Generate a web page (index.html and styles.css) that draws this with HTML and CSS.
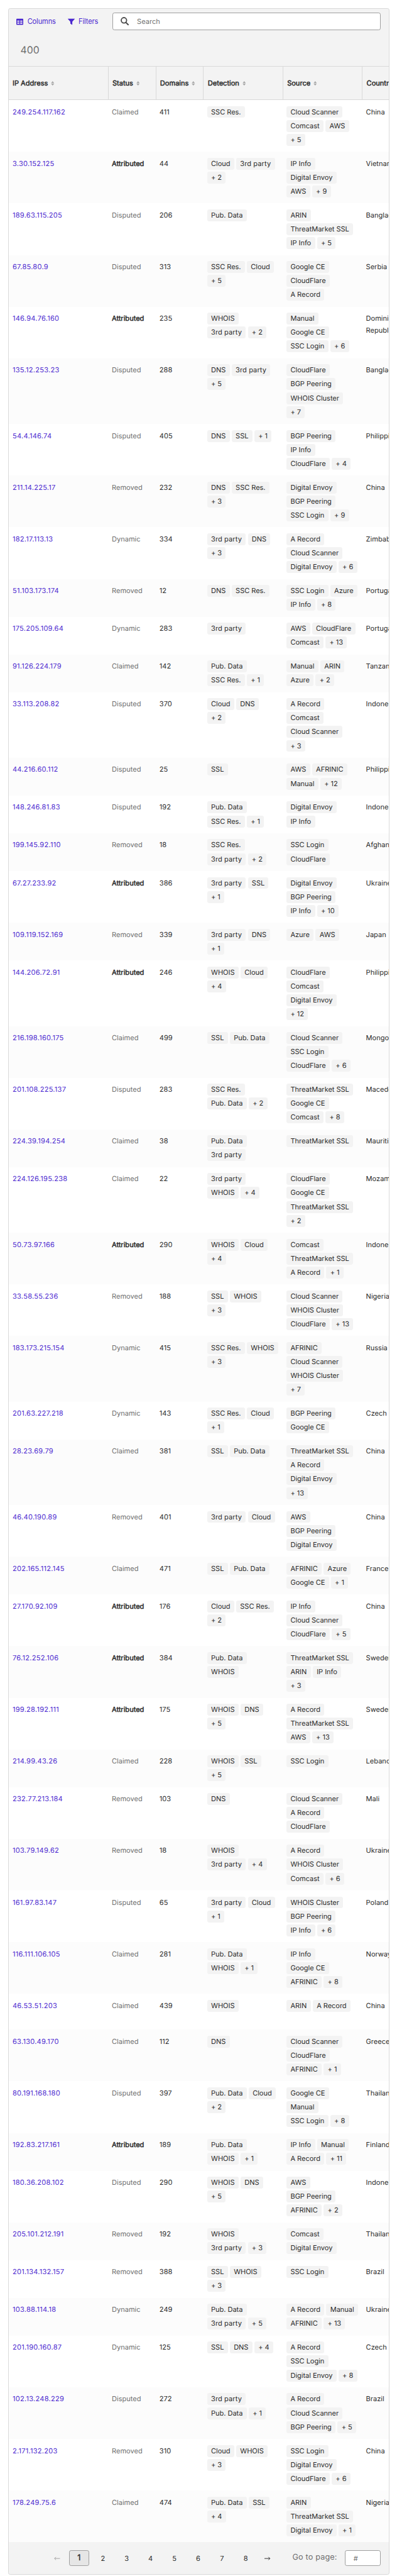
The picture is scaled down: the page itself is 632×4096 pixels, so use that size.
FILE: index.html
```
<!DOCTYPE html>
<html lang="en">
<head>
<meta charset="utf-8">
<title>IP addresses</title>
<link rel="stylesheet" href="styles.css">
</head>
<body>
<main class="panel">
  <div class="toolbar">
    <button class="tool"><svg class="tool-icon" viewBox="0 0 14 14"><path fill="currentColor" fill-rule="evenodd" d="M1.300.8h11.400A1.300 1.300 0 0 1 14 2.100v9.800a1.300 1.300 0 0 1-1.300 1.300H1.300A1.300 1.300 0 0 1 0 11.900V2.100A1.300 1.300 0 0 1 1.300.8zM1.800 4.600v2.300h4.400V4.600zm6 0v2.300h4.400V4.600zM1.800 8.700v2.500h4.400V8.700zm6 0v2.500h4.400V8.700z"/></svg>Columns</button>
    <button class="tool"><svg class="tool-icon" viewBox="0 0 14 14"><path fill="currentColor" d="M.5.8h13c.5 0 .6.500.3.900L9 7v5.800c0 .4-.4.500-.7.300L5.300 11A.8.8 0 0 1 5 10.400V7L.2 1.700C-.1 1.300 0 .8.5.8z"/></svg>Filters</button>
    <label class="search"><svg class="search-icon" viewBox="0 0 17 17"><circle cx="6.700" cy="6.700" r="5.400" fill="none" stroke="currentColor" stroke-width="2.300"/><path d="M10.600 10.900l4.600 4.600" stroke="currentColor" stroke-width="2.600" stroke-linecap="round"/></svg><span class="search-text">Search</span></label>
  </div>
  <div class="count">400</div>
  <div class="grid">
    <div class="row head" id="head"></div>
    <div id="rows"></div>
  </div>
  <nav class="pager">
    <span class="page arrow off"><svg viewBox="0 0 12 8"><path d="M12 4H1M4 1L1 4l3 3" fill="none" stroke="currentColor" stroke-width="1.200"/></svg></span>
    <span class="page current">1</span><span class="page">2</span><span class="page">3</span><span class="page">4</span><span class="page">5</span><span class="page">6</span><span class="page">7</span><span class="page">8</span>
    <span class="page arrow"><svg viewBox="0 0 12 8"><path d="M0 4H11M8 1l3 3-3 3" fill="none" stroke="currentColor" stroke-width="1.200"/></svg></span>
    <span class="goto">Go to page:</span><span class="goto-input">#</span>
  </nav>
</main>
<script src="script.js"></script>
</body>
</html>
```
FILE: styles.css
```
* { box-sizing: border-box; }
html { background: #fff; overflow: hidden; }
body {
  margin: 0;
  zoom: 0.7903;
  overflow: hidden;
  font: 14px/24px Inter, "Liberation Sans", sans-serif;
  text-rendering: geometricPrecision;
  color: #2b2b2b;
}
.panel {
  width: 768px;
  margin: 16px 0 0 16px;
  border: 1px solid #d9d9d9;
  border-radius: 4px;
  background: #f3f3f3;
  overflow: hidden;
}
.toolbar { display: flex; align-items: center; height: 52px; padding: 0 16px; }
.tool {
  display: flex;
  align-items: center;
  gap: 8px;
  margin: 0 24px 0 0;
  padding: 0;
  border: 0;
  background: none;
  font: inherit;
  letter-spacing: -0.15px;
  color: #4c29d0;
}
.tool-icon { width: 14px; height: 14px; }
.search {
  display: flex;
  align-items: center;
  width: 540px;
  height: 36px;
  margin-left: auto;
  padding: 0 15px;
  gap: 16px;
  border: 1px solid #9f9f9f;
  border-radius: 4px;
  background: #fff;
  color: #6f6f6f;
}
.search-icon { width: 17px; height: 17px; color: #4a4a4a; }
.search-text { padding-top: 2px; }
.count { height: 64px; padding: 20px 24px; font-size: 20px; color: #6f6f6f; }
.grid { overflow: hidden; }
.row {
  display: grid;
  grid-template-columns: 200px 96px 96px 160px 160px 160px;
  width: 872px;
  min-height: 72px;
  background: #fff;
}
.row:nth-child(even) { background: #fcfcfc; }
.cell { padding: 12px 8px; }
.head {
  height: 68px;
  min-height: 0;
  border-top: 1px solid #d9d9d9;
  border-bottom: 1px solid #d9d9d9;
  background: #f3f3f3;
  -webkit-text-stroke: 0.6px currentColor;
}
.head .cell { display: flex; align-items: center; gap: 6px; padding: 0 8px; }
.head .cell + .cell { border-left: 1px solid #d9d9d9; }
.sort { width: 7px; height: 9px; fill: #a8a8a8; }
.ip { color: #4c29d0; letter-spacing: 0.33px; }
.status { color: #6f6f6f; }
.attributed { color: #2b2b2b; -webkit-text-stroke: 0.6px currentColor; }
.tags { display: flex; flex-wrap: wrap; align-content: flex-start; gap: 4px; }
.tag {
  padding: 0 8px;
  border-radius: 4px;
  background: #f3f3f3;
  letter-spacing: -0.05px;
  white-space: nowrap;
}
.third-party { min-width: 78px; letter-spacing: 0.12px; }
.country { width: 134px; }
.pager { display: flex; align-items: center; height: 64px; padding: 0 16px 0 82px; }
.page { flex: none; width: 40px; height: 32px; margin-right: 8px; padding-top: 1px; line-height: 32px; text-align: center; }
.current {
  padding: 0;
  border: 1px solid #9f9f9f;
  border-radius: 4px;
  background: #e6e6e6;
  font-size: 16px;
  line-height: 30px;
  -webkit-text-stroke: 0.5px currentColor;
}
.arrow { display: flex; align-items: center; justify-content: center; width: 32px; padding: 0; }
.arrow svg { width: 12px; height: 8px; }
.off { color: #9f9f9f; }
.goto { margin-left: 26px; font-size: 16px; letter-spacing: 0.2px; color: #6f6f6f; white-space: nowrap; }
.goto-input {
  width: 72px;
  height: 32px;
  margin-left: auto;
  padding-left: 16px;
  border: 1px solid #9f9f9f;
  border-radius: 4px;
  background: #fff;
  line-height: 32px;
  color: #6f6f6f;
}
```
FILE: script.js
```
const columns = ["IP Address", "Status", "Domains", "Detection", "Source", "Country"];

// ip | status | domains | detection tags | source tags | country
const data = `249.254.117.162|Claimed|411|SSC Res.|Cloud Scanner,Comcast,AWS,+ 5|China
3.30.152.125|Attributed|44|Cloud,3rd party,+ 2|IP Info,Digital Envoy,AWS,+ 9|Vietnam
189.63.115.205|Disputed|206|Pub. Data|ARIN,ThreatMarket SSL,IP Info,+ 5|Bangladesh
67.85.80.9|Disputed|313|SSC Res.,Cloud,+ 5|Google CE,CloudFlare,A Record|Serbia
146.94.76.160|Attributed|235|WHOIS,3rd party,+ 2|Manual,Google CE,SSC Login,+ 6|Dominican Republic
135.12.253.23|Disputed|288|DNS,3rd party,+ 5|CloudFlare,BGP Peering,WHOIS Cluster,+ 7|Bangladesh
54.4.146.74|Disputed|405|DNS,SSL,+ 1|BGP Peering,IP Info,CloudFlare,+ 4|Philippines
211.14.225.17|Removed|232|DNS,SSC Res.,+ 3|Digital Envoy,BGP Peering,SSC Login,+ 9|China
182.17.113.13|Dynamic|334|3rd party,DNS,+ 3|A Record,Cloud Scanner,Digital Envoy,+ 6|Zimbabwe
51.103.173.174|Removed|12|DNS,SSC Res.|SSC Login,Azure,IP Info,+ 8|Portugal
175.205.109.64|Dynamic|283|3rd party|AWS,CloudFlare,Comcast,+ 13|Portugal
91.126.224.179|Claimed|142|Pub. Data,SSC Res.,+ 1|Manual,ARIN,Azure,+ 2|Tanzania
33.113.208.82|Disputed|370|Cloud,DNS,+ 2|A Record,Comcast,Cloud Scanner,+ 3|Indonesia
44.216.60.112|Disputed|25|SSL|AWS,AFRINIC,Manual,+ 12|Philippines
148.246.81.83|Disputed|192|Pub. Data,SSC Res.,+ 1|Digital Envoy,IP Info|Indonesia
199.145.92.110|Removed|18|SSC Res.,3rd party,+ 2|SSC Login,CloudFlare|Afghanistan
67.27.233.92|Attributed|386|3rd party,SSL,+ 1|Digital Envoy,BGP Peering,IP Info,+ 10|Ukraine
109.119.152.169|Removed|339|3rd party,DNS,+ 1|Azure,AWS|Japan
144.206.72.91|Attributed|246|WHOIS,Cloud,+ 4|CloudFlare,Comcast,Digital Envoy,+ 12|Philippines
216.198.160.175|Claimed|499|SSL,Pub. Data|Cloud Scanner,SSC Login,CloudFlare,+ 6|Mongolia
201.108.225.137|Disputed|283|SSC Res.,Pub. Data,+ 2|ThreatMarket SSL,Google CE,Comcast,+ 8|Macedonia
224.39.194.254|Claimed|38|Pub. Data,3rd party|ThreatMarket SSL|Mauritius
224.126.195.238|Claimed|22|3rd party,WHOIS,+ 4|CloudFlare,Google CE,ThreatMarket SSL,+ 2|Mozambique
50.73.97.166|Attributed|290|WHOIS,Cloud,+ 4|Comcast,ThreatMarket SSL,A Record,+ 1|Indonesia
33.58.55.236|Removed|188|SSL,WHOIS,+ 3|Cloud Scanner,WHOIS Cluster,CloudFlare,+ 13|Nigeria
183.173.215.154|Dynamic|415|SSC Res.,WHOIS,+ 3|AFRINIC,Cloud Scanner,WHOIS Cluster,+ 7|Russia
201.63.227.218|Dynamic|143|SSC Res.,Cloud,+ 1|BGP Peering,Google CE|Czech Republic
28.23.69.79|Claimed|381|SSL,Pub. Data|ThreatMarket SSL,A Record,Digital Envoy,+ 13|China
46.40.190.89|Removed|401|3rd party,Cloud|AWS,BGP Peering,Digital Envoy|China
202.165.112.145|Claimed|471|SSL,Pub. Data|AFRINIC,Azure,Google CE,+ 1|France
27.170.92.109|Attributed|176|Cloud,SSC Res.,+ 2|IP Info,Cloud Scanner,CloudFlare,+ 5|China
76.12.252.106|Attributed|384|Pub. Data,WHOIS|ThreatMarket SSL,ARIN,IP Info,+ 3|Sweden
199.28.192.111|Attributed|175|WHOIS,DNS,+ 5|A Record,ThreatMarket SSL,AWS,+ 13|Sweden
214.99.43.26|Claimed|228|WHOIS,SSL,+ 5|SSC Login|Lebanon
232.77.213.184|Removed|103|DNS|Cloud Scanner,A Record,CloudFlare|Mali
103.79.149.62|Removed|18|WHOIS,3rd party,+ 4|A Record,WHOIS Cluster,Comcast,+ 6|Ukraine
161.97.83.147|Disputed|65|3rd party,Cloud,+ 1|WHOIS Cluster,BGP Peering,IP Info,+ 6|Poland
116.111.106.105|Claimed|281|Pub. Data,WHOIS,+ 1|IP Info,Google CE,AFRINIC,+ 8|Norway
46.53.51.203|Claimed|439|WHOIS|ARIN,A Record|China
63.130.49.170|Claimed|112|DNS|Cloud Scanner,CloudFlare,AFRINIC,+ 1|Greece
80.191.168.180|Disputed|397|Pub. Data,Cloud,+ 2|Google CE,Manual,SSC Login,+ 8|Thailand
192.83.217.161|Attributed|189|Pub. Data,WHOIS,+ 1|IP Info,Manual,A Record,+ 11|Finland
180.36.208.102|Disputed|290|WHOIS,DNS,+ 5|AWS,BGP Peering,AFRINIC,+ 2|Indonesia
205.101.212.191|Removed|192|WHOIS,3rd party,+ 3|Comcast,Digital Envoy|Thailand
201.134.132.157|Removed|388|SSL,WHOIS,+ 3|SSC Login|Brazil
103.88.114.18|Dynamic|249|Pub. Data,3rd party,+ 5|A Record,Manual,AFRINIC,+ 13|Ukraine
201.190.160.87|Dynamic|125|SSL,DNS,+ 4|A Record,SSC Login,Digital Envoy,+ 8|Czech Republic
102.13.248.229|Disputed|272|3rd party,Pub. Data,+ 1|A Record,Cloud Scanner,BGP Peering,+ 5|Brazil
2.171.132.203|Removed|310|Cloud,WHOIS,+ 3|SSC Login,Digital Envoy,CloudFlare,+ 6|China
178.249.75.6|Claimed|474|Pub. Data,SSL,+ 4|ARIN,ThreatMarket SSL,Digital Envoy,+ 1|Nigeria`;

const sortIcon = '<svg class="sort" viewBox="0 0 7 9"><path d="M3.500 0L6.700 4H.3zM.3 5h6.400L3.500 9z"/></svg>';
const tag = t => `<span class="tag${t === "3rd party" ? " third-party" : ""}">${t}</span>`;
const tags = list => list.split(",").map(tag).join("");

document.getElementById("head").innerHTML =
  columns.map(c => `<div class="cell">${c}${sortIcon}</div>`).join("");

document.getElementById("rows").innerHTML = data.split("\n").map(line => {
  const [ip, status, domains, detection, source, country] = line.split("|");
  return `<div class="row">
    <div class="cell ip">${ip}</div>
    <div class="cell status ${status.toLowerCase()}">${status}</div>
    <div class="cell">${domains}</div>
    <div class="cell tags">${tags(detection)}</div>
    <div class="cell tags">${tags(source)}</div>
    <div class="cell country">${country}</div>
  </div>`;
}).join("");
```
